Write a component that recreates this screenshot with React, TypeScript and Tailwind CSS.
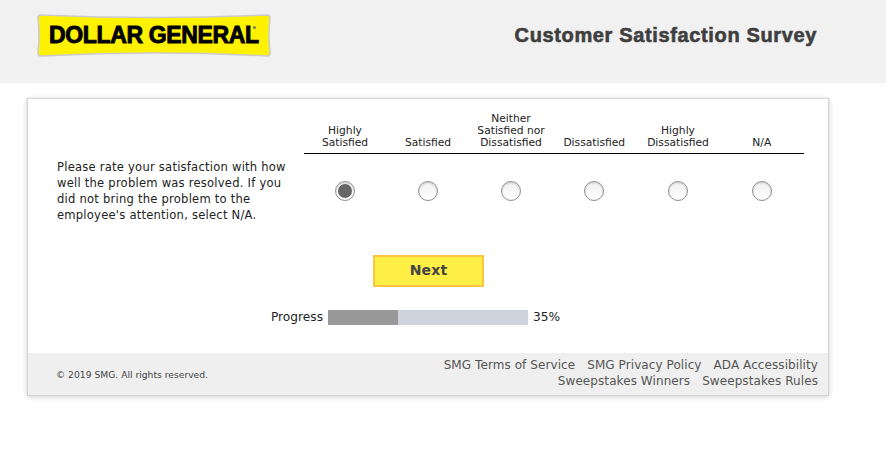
const font = { fontFamily: '"DejaVu Sans", Verdana, sans-serif' };
const cols = [
  ['Highly', 'Satisfied'],
  ['Satisfied'],
  ['Neither', 'Satisfied nor', 'Dissatisfied'],
  ['Dissatisfied'],
  ['Highly', 'Dissatisfied'],
  ['N/A'],
];

function Logo() {
  return (
    <div className="relative w-[234px] h-[43px]">
      <svg width="234" height="43" viewBox="0 0 234 43" className="absolute inset-0">
        <path
          d="M4 1 Q117 6 230 1 Q233 1 233 4 Q231 21 233 39 Q233 42 230 42 Q117 36 4 42 Q1 42 1 39 Q3 21 1 4 Q1 1 4 1 Z"
          fill="#fff200"
          stroke="#c9cbd0"
          strokeWidth="1.5"
        />
      </svg>
      <div
        className="absolute left-[12px] top-[8px] text-[23px] leading-[27px] font-bold text-black whitespace-nowrap tracking-[-0.35px]"
        style={{ fontFamily: '"Liberation Sans", Arial, sans-serif', WebkitTextStroke: '0.9px #000' }}
      >
        DOLLAR GENERAL
      </div>
      <div className="absolute left-[216px] top-[12px] w-[3px] h-[3px] rounded-full bg-[#777]" />
    </div>
  );
}

function Radio({ checked }: { checked?: boolean }) {
  return (
    <div className="w-5 h-5 rounded-full border border-[#8f8f8f] bg-gradient-to-b from-[#f0f0f0] to-white flex items-center justify-center shadow-[inset_0_1px_2px_rgba(0,0,0,0.15)]">
      {checked && <div className="w-[14px] h-[14px] rounded-full bg-[#666]" />}
    </div>
  );
}

export default function App() {
  return (
    <div className="w-[886px] h-[458px] bg-white overflow-hidden" style={font}>
      <header className="h-[83px] bg-[#f1f1f1] flex items-start justify-between pl-[37px] pr-[69px]">
        <div className="pt-[14px]">
          <Logo />
        </div>
        <h1
          className="pt-[23px] text-[20px] leading-[24px] font-bold text-[#3f3f3f] tracking-[0.64px]"
          style={{ fontFamily: '"Liberation Sans", Arial, sans-serif', WebkitTextStroke: '0.6px #3f3f3f' }}
        >
          Customer Satisfaction Survey
        </h1>
      </header>

      <main className="ml-[27px] mt-[15px] w-[802px] h-[298px] bg-white border border-[#d4d4d4] shadow-[0_1px_5px_rgba(0,0,0,0.2)] flex flex-col">
        <div className="flex-1 flex flex-col">
          <div className="flex pt-[8px] pl-[29px] pr-[24px]">
            <div className="w-[247px] shrink-0">
              <p className="mt-[52px] w-[236px] text-[11.55px] leading-[16px] text-[#222] tracking-[0.02em]">
                Please rate your satisfaction with how well the problem was resolved. If you did not bring the problem to the employee's attention, select N/A.
              </p>
            </div>
            <div className="w-[500px] shrink-0">
              <div className="grid grid-cols-[83px_83px_83px_83.5px_84px_83.5px] h-[42px] items-end border-b border-black pb-[4px] box-content">
                {cols.map((lines, i) => (
                  <div key={i} className="text-center text-[10.7px] leading-[12px] text-[#222] whitespace-nowrap pr-[1px]">
                    {lines.map((l) => (
                      <div key={l}>{l}</div>
                    ))}
                  </div>
                ))}
              </div>
              <div className="grid grid-cols-[83px_83px_83px_83.5px_84px_83.5px] pt-[27px]">
                {cols.map((_, i) => (
                  <div key={i} className="flex justify-center pr-[1px]">
                    <Radio checked={i === 0} />
                  </div>
                ))}
              </div>
            </div>
          </div>

          <div className="mt-[32px] flex justify-center pl-[1px]">
            <button className="w-[111px] h-[32px] pb-[2px] bg-[#ffee44] border-2 border-[#ffc440] text-[14px] font-bold text-[#444] tracking-[0.2px]">
              Next
            </button>
          </div>

          <div className="mt-[23px] flex items-center text-[12.2px] leading-[15px] text-[#222]">
            <span className="w-[300px] text-right pr-[5px]">Progress</span>
            <div className="w-[200px] h-[15px] bg-[#cfd3dd]">
              <div className="h-full bg-[#999999]" style={{ width: '35%' }} />
            </div>
            <span className="ml-[5px]">35%</span>
          </div>
        </div>

        <footer className="h-[42px] bg-[#efefef] flex items-center justify-between pl-[28px] pr-[10px]">
          <div className="text-[9.2px] text-[#444] pt-[1px]">© 2019 SMG. All rights reserved.</div>
          <div className="text-[12px] leading-[16px] text-[#555] text-right tracking-[0.08px] mb-[2px]">
            <div className="flex justify-end gap-[12px]">
              <span>SMG Terms of Service</span>
              <span>SMG Privacy Policy</span>
              <span>ADA Accessibility</span>
            </div>
            <div className="flex justify-end gap-[12px]">
              <span>Sweepstakes Winners</span>
              <span>Sweepstakes Rules</span>
            </div>
          </div>
        </footer>
      </main>
    </div>
  );
}
